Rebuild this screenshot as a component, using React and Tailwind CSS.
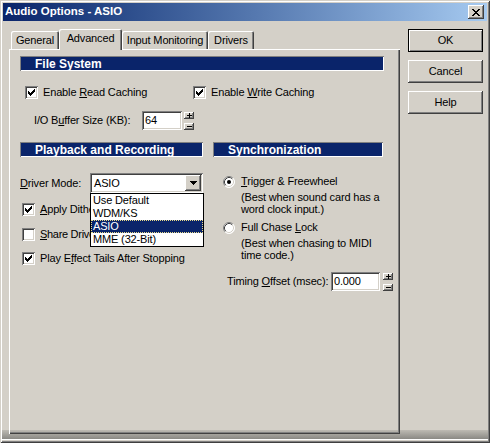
import React from "react";

const RAISED =
  "shadow-[inset_-1px_-1px_#404040,inset_1px_1px_#ffffff,inset_-2px_-2px_#808080,inset_2px_2px_#d4d0c8]";
const SUNKEN =
  "shadow-[inset_1px_1px_#808080,inset_-1px_-1px_#ffffff,inset_2px_2px_#404040,inset_-2px_-2px_#d4d0c8]";

function Px({ rows, color = "#000000" }) {
  const w = rows[0].length;
  const h = rows.length;
  return (
    <svg width={w} height={h} viewBox={`0 0 ${w} ${h}`} shapeRendering="crispEdges" className="block">
      {rows.flatMap((r, y) =>
        r.split("").map((c, x) =>
          c === "x" ? <rect key={x + "-" + y} x={x} y={y} width="1" height="1" fill={color} /> : null
        )
      )}
    </svg>
  );
}

const CHECK = ["......x", ".....xx", "x...xxx", "xx.xxx.", "xxxxx..", ".xxx...", "..x...."];
const XG = ["xx....xx", ".xx..xx.", "..xxxx..", "...xx...", "..xxxx..", ".xx..xx.", "xx....xx"];
const ARROW = ["xxxxxxx", ".xxxxx.", "..xxx..", "...x..."];
const PLUS = ["..x..", "..x..", "xxxxx", "..x..", "..x.."];
const MINUS = ["xxxxx"];

function Check({ checked }) {
  return (
    <div className={`w-[13px] h-[13px] shrink-0 bg-white ${SUNKEN} flex items-center justify-center`}>
      {checked && <Px rows={CHECK} />}
    </div>
  );
}

function Radio({ checked }) {
  return (
    <svg width="12" height="12" viewBox="0 0 12 12" className="block shrink-0">
      <circle cx="6" cy="6" r="5.5" fill="#ffffff" />
      <path d="M2.11 9.89 A5.5 5.5 0 0 1 9.89 2.11" stroke="#808080" fill="none" />
      <path d="M9.89 2.11 A5.5 5.5 0 0 1 2.11 9.89" stroke="#ffffff" fill="none" />
      <path d="M2.82 9.18 A4.5 4.5 0 0 1 9.18 2.82" stroke="#404040" fill="none" />
      <path d="M9.18 2.82 A4.5 4.5 0 0 1 2.82 9.18" stroke="#d4d0c8" fill="none" />
      {checked && <circle cx="6" cy="6" r="2" fill="#000000" />}
    </svg>
  );
}

function Spin() {
  return (
    <div className="flex flex-col gap-[4px] pt-[1px] self-start shrink-0">
      <div className={`w-[10px] h-[7px] bg-[#d4d0c8] ${RAISED} flex items-center justify-center`}>
        <Px rows={PLUS} />
      </div>
      <div className={`w-[10px] h-[7px] bg-[#d4d0c8] ${RAISED} flex items-center justify-center`}>
        <Px rows={MINUS} />
      </div>
    </div>
  );
}

function Header({ children, className = "" }) {
  return (
    <div
      className={`h-[15px] shrink-0 bg-[#0a246a] shadow-[inset_1px_1px_#808080,inset_-1px_-1px_#ffffff] flex items-center pl-[15px] text-white font-bold text-[12px] leading-none tracking-normal ${className}`}
    >
      {children}
    </div>
  );
}

function U({ children }) {
  return <span className="underline underline-offset-[1px]">{children}</span>;
}

export default function App() {
  return (
    <div className="w-[490px] h-[443px] bg-[#d4d0c8] bg-[linear-gradient(180deg,#d4d0c8_430px,#bdbab3_430px,#8a8984_439px,#ffffff_439px,#ffffff_440px,#d4d0c8_440px)] shadow-[inset_1px_1px_#d4d0c8,inset_-1px_-1px_#404040,inset_2px_2px_#ffffff,inset_-2px_-2px_#808080] p-[3px] flex flex-col font-['Liberation_Sans',Arial,sans-serif] text-[11px] text-black leading-[13px] tracking-[-0.15px] overflow-hidden">
      {/* Title bar */}
      <div className="h-[18px] bg-gradient-to-r from-[#0a246a] to-[#a6caf0] flex items-center justify-between pl-[2px] pr-[3px]">
        <span className="text-white font-bold text-[11.5px] leading-none tracking-normal">Audio Options - ASIO</span>
        <div className={`w-[16px] h-[14px] bg-[#d4d0c8] ${RAISED} flex items-center justify-center`}>
          <Px rows={XG} />
        </div>
      </div>

      {/* Body */}
      <div className="flex pl-[6px] pt-[8px]">
        <div className="w-[391px] shrink-0 flex flex-col">
          {/* Tabs */}
          <div className="h-[20px] flex items-end pl-[2px]">
            <div className="w-[48px] h-[18px] rounded-t-[2px] shadow-[inset_1px_1px_#ffffff,inset_-1px_0_#404040,inset_-2px_0_#808080] flex items-center justify-center">
              General
            </div>
            <div className="relative z-10 -mb-px w-[63px] h-[21px] bg-[#d4d0c8] rounded-t-[2px] shadow-[inset_1px_1px_#ffffff,inset_-1px_0_#404040,inset_-2px_0_#808080] flex items-start justify-center pt-[3px]">
              Advanced
            </div>
            <div className="w-[86px] h-[18px] rounded-t-[2px] shadow-[inset_1px_1px_#ffffff,inset_-1px_0_#404040,inset_-2px_0_#808080] flex items-center justify-center">
              Input Monitoring
            </div>
            <div className="w-[46px] h-[18px] rounded-t-[2px] shadow-[inset_1px_1px_#ffffff,inset_-1px_0_#404040,inset_-2px_0_#808080] flex items-center justify-center">
              Drivers
            </div>
          </div>

          {/* Panel */}
          <div className="w-[391px] h-[385px] shadow-[inset_1px_1px_#ffffff,inset_-1px_-1px_#404040,inset_-2px_-2px_#808080] pl-[11px] pt-[7px] flex flex-col">
            <Header className="w-[364px]">File System</Header>

            <div className="mt-[15px] h-[13px] flex items-center">
              <div className="w-[173px] shrink-0 flex items-center">
                <div className="ml-[5px]">
                  <Check checked />
                </div>
                <span className="ml-[5px] whitespace-nowrap">
                  Enable <U>R</U>ead Caching
                </span>
              </div>
              <Check checked />
              <span className="ml-[5px] whitespace-nowrap">
                Enable <U>W</U>rite Caching
              </span>
            </div>

            <div className="mt-[12px] h-[19px] flex items-center">
              <span className="ml-[14px] w-[108px] shrink-0 whitespace-nowrap">
                I/O B<U>u</U>ffer Size (KB):
              </span>
              <div className={`w-[40px] h-[19px] shrink-0 bg-white ${SUNKEN} flex items-center pl-[3px]`}>64</div>
              <div className="ml-[2px] h-[19px] flex">
                <Spin />
              </div>
            </div>

            <div className="mt-[12px] flex">
              <Header className="w-[183px]">Playback and Recording</Header>
              <Header className="w-[170px] ml-[10px]">Synchronization</Header>
            </div>

            <div className="flex">
              {/* Left column */}
              <div className="w-[183px] shrink-0 flex flex-col">
                <div className="mt-[16px] h-[20px] flex items-center">
                  <span className="w-[70px] shrink-0 whitespace-nowrap">
                    <U>D</U>river Mode:
                  </span>
                  <div className={`relative w-[113px] h-[20px] shrink-0 bg-white ${SUNKEN} flex items-center p-[2px]`}>
                    <span className="flex-1 pl-[2px]">ASIO</span>
                    <div className={`w-[16px] h-[16px] bg-[#d4d0c8] ${RAISED} flex items-center justify-center`}>
                      <Px rows={ARROW} />
                    </div>
                    <div className="absolute left-0 top-[20px] z-20 w-[114px] border border-black bg-white flex flex-col">
                      <div className="h-[13px] pl-[2px] whitespace-nowrap">Use Default</div>
                      <div className="h-[13px] pl-[2px] whitespace-nowrap">WDM/KS</div>
                      <div className="h-[13px] pl-[1px] bg-[#0a246a] text-white border border-dotted border-[#e6d98a] leading-[11px] whitespace-nowrap">
                        ASIO
                      </div>
                      <div className="h-[13px] pl-[2px] whitespace-nowrap">MME (32-Bit)</div>
                    </div>
                  </div>
                </div>

                <div className="mt-[10px] h-[13px] flex items-center">
                  <div className="ml-[2px]">
                    <Check checked />
                  </div>
                  <span className="ml-[5px] whitespace-nowrap">
                    <U>A</U>pply Dither
                  </span>
                </div>
                <div className="mt-[12px] h-[13px] flex items-center">
                  <div className="ml-[2px]">
                    <Check />
                  </div>
                  <span className="ml-[5px] whitespace-nowrap tracking-[-0.3px]">
                    <U>S</U>hare Drivers With Other Programs
                  </span>
                </div>
                <div className="mt-[11px] h-[13px] flex items-center">
                  <div className="ml-[2px]">
                    <Check checked />
                  </div>
                  <span className="ml-[5px] whitespace-nowrap">
                    Play E<U>f</U>fect Tails After Stopping
                  </span>
                </div>
              </div>

              {/* Right column */}
              <div className="ml-[10px] w-[170px] shrink-0 flex flex-col">
                <div className="mt-[18px] h-[13px] flex items-center">
                  <div className="ml-[10px]">
                    <Radio checked />
                  </div>
                  <span className="ml-[6px] whitespace-nowrap">
                    <U>T</U>rigger &amp; Freewheel
                  </span>
                </div>
                <div className="ml-[28px] mt-[3px] leading-[12px] whitespace-nowrap">
                  <div>(Best when sound card has a</div>
                  <div>word clock input.)</div>
                </div>
                <div className="mt-[6px] h-[13px] flex items-center">
                  <div className="ml-[10px]">
                    <Radio />
                  </div>
                  <span className="ml-[6px] whitespace-nowrap">
                    Full Chase <U>L</U>ock
                  </span>
                </div>
                <div className="ml-[28px] mt-[3px] leading-[12px] whitespace-nowrap">
                  <div>(Best when chasing to MIDI</div>
                  <div>time code.)</div>
                </div>
                <div className="mt-[11px] h-[19px] flex items-center">
                  <span className="ml-[14px] w-[104px] shrink-0 whitespace-nowrap">
                    Timing <U>O</U>ffset (msec):
                  </span>
                  <div className={`w-[49px] h-[19px] shrink-0 bg-white ${SUNKEN} flex items-center pl-[3px]`}>0.000</div>
                  <div className="ml-[3px] h-[19px] flex shrink-0">
                    <Spin />
                  </div>
                </div>
              </div>
            </div>
          </div>
        </div>

        {/* Buttons */}
        <div className="ml-[8px] flex flex-col gap-[8px]">
          <div className="w-[75px] h-[23px] bg-[#d4d0c8] shadow-[inset_0_0_0_1px_#000000,inset_2px_2px_#ffffff,inset_-2px_-2px_#808080] flex items-center justify-center">
            OK
          </div>
          <div className={`w-[75px] h-[23px] bg-[#d4d0c8] ${RAISED} flex items-center justify-center`}>Cancel</div>
          <div className={`w-[75px] h-[23px] bg-[#d4d0c8] ${RAISED} flex items-center justify-center`}>Help</div>
        </div>
      </div>
    </div>
  );
}
